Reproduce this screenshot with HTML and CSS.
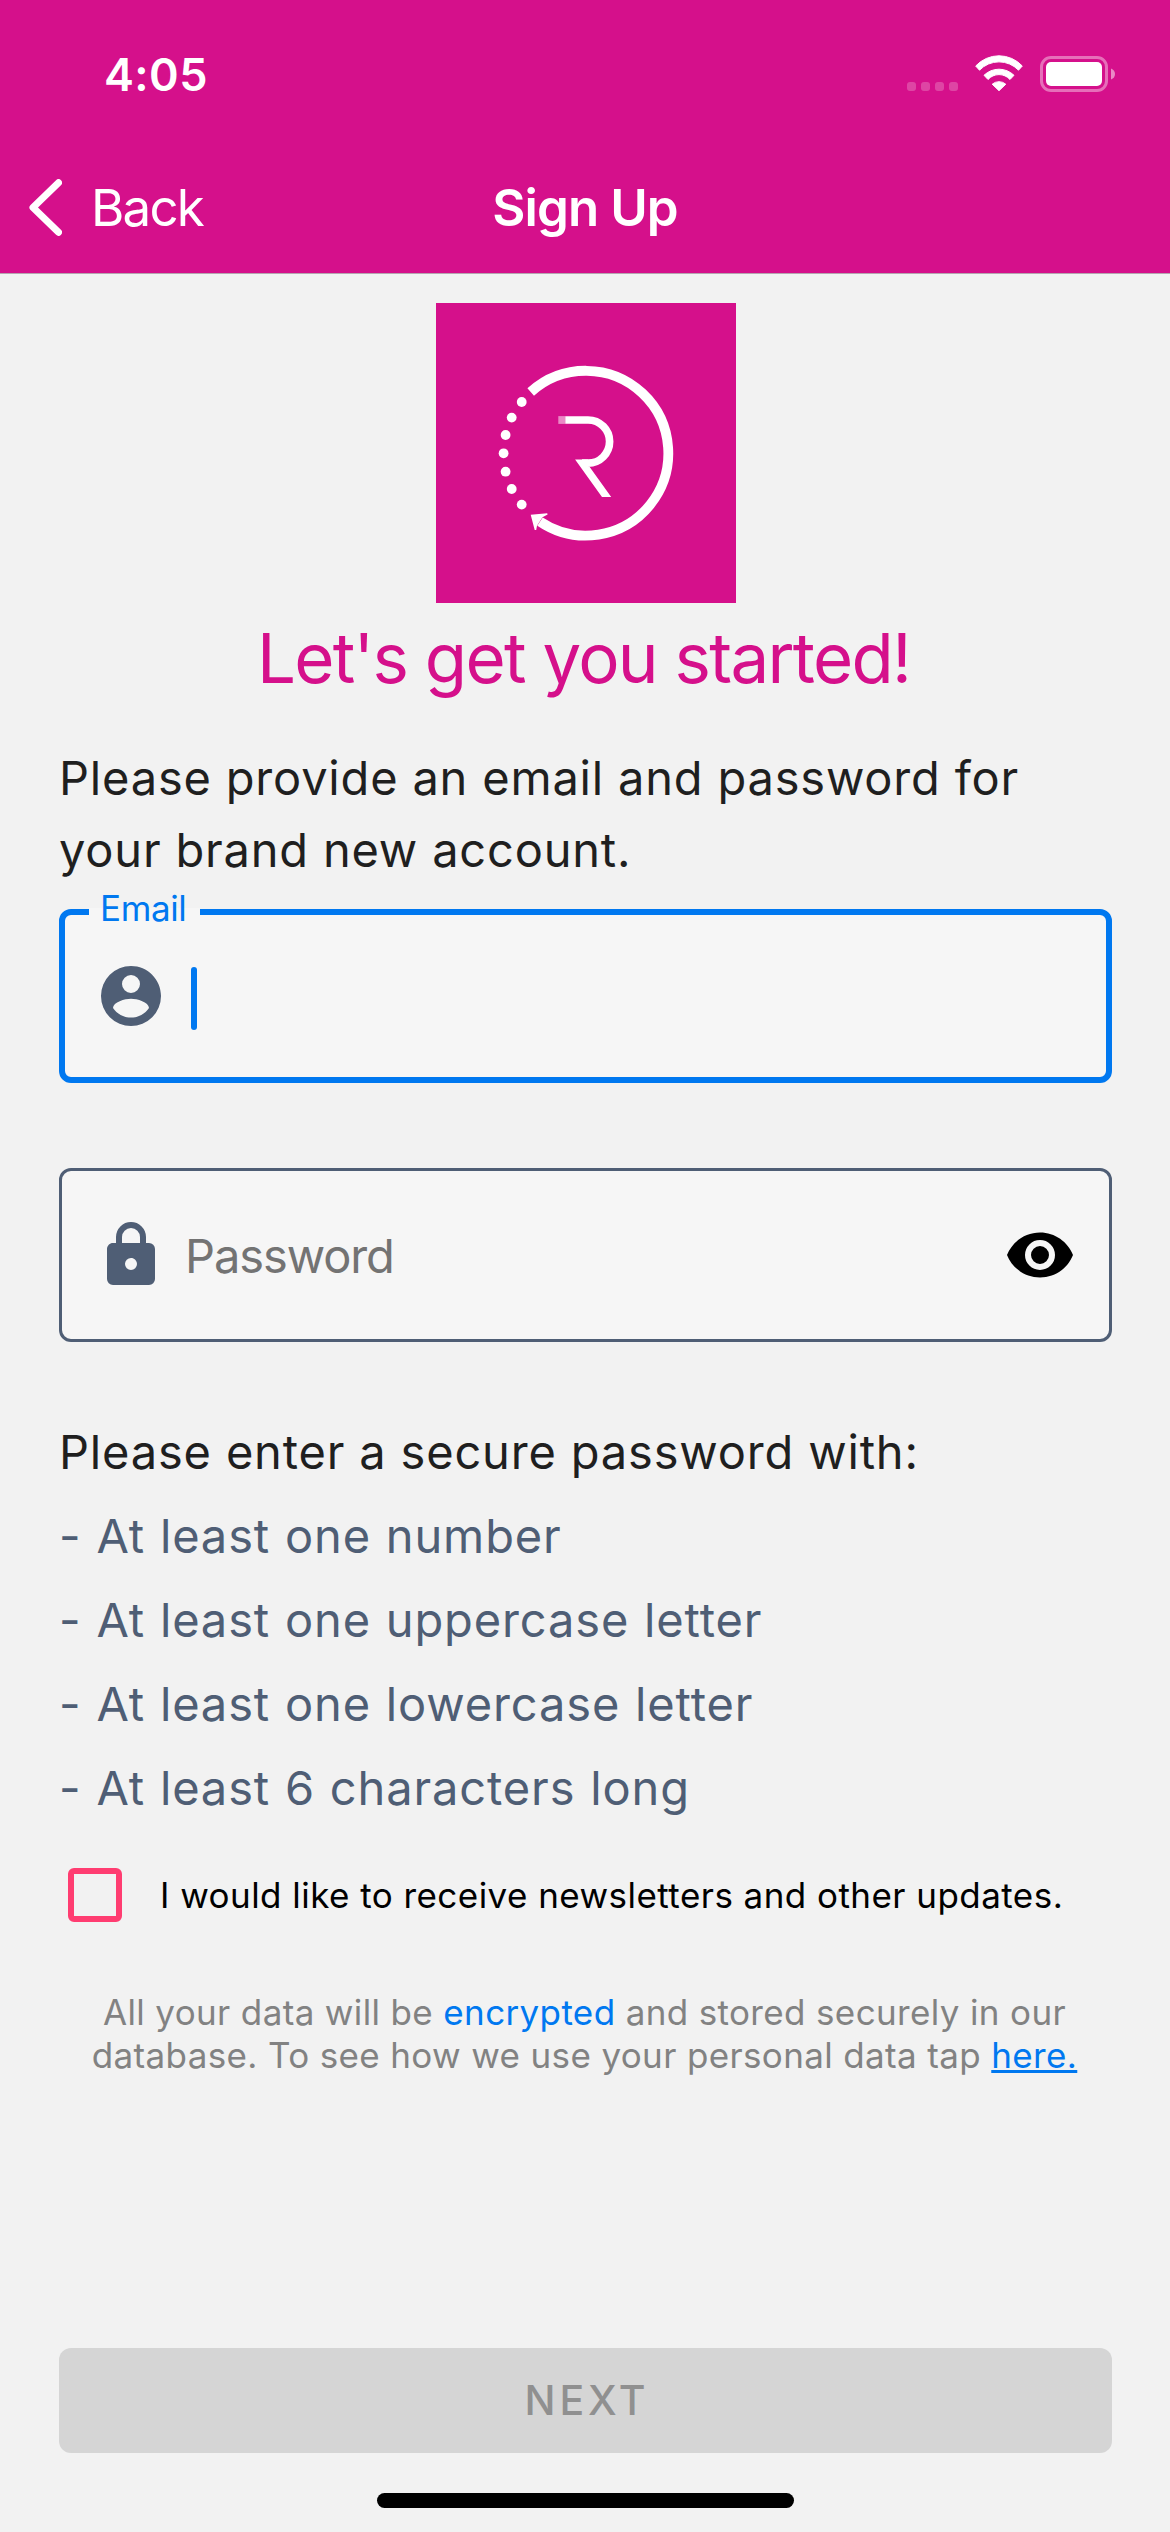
FILE: index.html
```html
<!DOCTYPE html>
<html lang="en">
<head>
<meta charset="utf-8">
<title>Sign Up</title>
<link rel="stylesheet" href="styles.css">
</head>
<body>
<div class="screen">
  <header class="header">
    <div class="status">
      <span class="time">4:05</span>
      <div class="indicators">
        <svg class="signal" width="51" height="38" viewBox="0 0 51 38"><g fill="#fff" opacity=".22"><rect x="0" y="27" width="9" height="9" rx="3"/><rect x="14" y="27" width="9" height="9" rx="3"/><rect x="28" y="27" width="9" height="9" rx="3"/><rect x="42" y="27" width="9" height="9" rx="3"/></g></svg>
        <svg class="wifi" width="48" height="38" viewBox="0 0 48 38"><g fill="#fff" stroke="#fff" stroke-width="1" stroke-linejoin="round"><path d="M.7 11A31.7 31.7 0 0 1 47.3 11L43.5 15.2A27 27 0 0 0 4.5 15.2Z"/><path d="M9 20.3A21.5 21.5 0 0 1 39 20.3L35 24.5A14.8 14.8 0 0 0 13 24.5Z"/><path d="M17.2 29.2A10.5 10.5 0 0 1 30.8 29.2L24 35.7Z"/></g></svg>
        <svg class="battery" width="75" height="38" viewBox="0 0 75 38"><rect x="1.5" y="2.5" width="65" height="33" rx="9.5" fill="none" stroke="#fff" stroke-width="3" opacity=".4"/><rect x="6" y="7" width="56" height="24" rx="5" fill="#fff"/><path d="M71 13.5Q75 15 75 19T71 24.5Z" fill="#fff" opacity=".5"/></svg>
      </div>
    </div>
    <nav class="nav">
      <div class="back">
        <svg width="33" height="57" viewBox="0 0 33 57"><path d="M29.5 3.7L4 28.5L29.5 53.3" fill="none" stroke="#fff" stroke-width="7" stroke-linecap="round" stroke-linejoin="round"/></svg>
        <span>Back</span>
      </div>
      <h1 class="nav-title">Sign Up</h1>
    </nav>
  </header>
  <main class="content">
    <svg class="logo" width="300" height="300" viewBox="0 0 300 300">
      <g fill="none" stroke="#fff">
        <path d="M94.7 89A82.4 82.4 0 1 1 104 218.6" stroke-width="9.8"/>
        <path d="M129.3 117H152A21.6 21.6 0 0 1 152 160.2H146" stroke-width="7.7"/>
      </g>
      <g fill="#fff">
        <path d="M122.3 113.1H129.4V120.9H122.3Z" opacity=".5"/>
        <path d="M139.1 156.4H152V164H153.7L175.2 194H166Z"/>
        <path d="M94.7 211.7L111.2 210.3L111.6 211.5L106.5 214.3L101 222.7L100.2 227H98.7Z"/>
        <circle cx="85.7" cy="99" r="4.9"/><circle cx="75.7" cy="114.6" r="4.9"/><circle cx="69.6" cy="132" r="4.9"/><circle cx="67.6" cy="150.3" r="4.9"/><circle cx="69.6" cy="168.7" r="4.9"/><circle cx="75.7" cy="186" r="4.9"/><circle cx="85.7" cy="201.6" r="4.9"/>
      </g>
    </svg>
    <h2 class="title">Let's get you started!</h2>
    <p class="intro">Please provide an email and password for<br>your brand new account.</p>
    <div class="field field-active">
      <span class="label">Email</span>
      <svg width="72" height="72" viewBox="0 0 24 24" fill="#4f5e75"><path d="M12,19.2C9.5,19.2 7.29,17.92 6,16C6.03,14 10,12.9 12,12.9C14,12.9 17.97,14 18,16C16.71,17.92 14.5,19.2 12,19.2M12,5A3,3 0 0,1 15,8A3,3 0 0,1 12,11A3,3 0 0,1 9,8A3,3 0 0,1 12,5M12,2A10,10 0 0,0 2,12A10,10 0 0,0 12,22A10,10 0 0,0 22,12C22,6.47 17.5,2 12,2Z"/></svg>
      <span class="caret"></span>
    </div>
    <div class="field">
      <svg width="72" height="72" viewBox="0 0 24 24" fill="#4f5e75"><path d="M12,17A2,2 0 0,0 14,15C14,13.89 13.1,13 12,13A2,2 0 0,0 10,15A2,2 0 0,0 12,17M18,8A2,2 0 0,1 20,10V20A2,2 0 0,1 18,22H6A2,2 0 0,1 4,20V10C4,8.89 4.9,8 6,8H7V6A5,5 0 0,1 12,1A5,5 0 0,1 17,6V8H18M12,3A3,3 0 0,0 9,6V8H15V6A3,3 0 0,0 12,3Z"/></svg>
      <span class="placeholder">Password</span>
      <svg width="72" height="72" viewBox="0 0 24 24"><path d="M12,9A3,3 0 0,0 9,12A3,3 0 0,0 12,15A3,3 0 0,0 15,12A3,3 0 0,0 12,9M12,17A5,5 0 0,1 7,12A5,5 0 0,1 12,7A5,5 0 0,1 17,12A5,5 0 0,1 12,17M12,4.5C7,4.5 2.73,7.61 1,12C2.73,16.39 7,19.5 12,19.5C17,19.5 21.27,16.39 23,12C21.27,7.61 17,4.5 12,4.5Z"/></svg>
    </div>
    <p class="rules-title">Please enter a secure password with:</p>
    <ul class="rules">
      <li>- At least one number</li>
      <li>- At least one uppercase letter</li>
      <li>- At least one lowercase letter</li>
      <li>- At least 6 characters long</li>
    </ul>
    <div class="newsletter"><span class="checkbox"></span><span>I would like to receive newsletters and other updates.</span></div>
    <p class="privacy">All your data will be <span class="link">encrypted</span> and stored securely in our<br>database. To see how we use your personal data tap <a class="link here">here.</a></p>
    <div class="next">NEXT</div>
  </main>
  <div class="home"></div>
</div>
</body>
</html>
```
FILE: styles.css
```css
* { box-sizing: border-box; }
body {
  margin: 0;
  background: #f2f2f2;
  font-family: Inter, "Liberation Sans", sans-serif;
  color: #1f1f1f;
}
h1, h2, p, ul { margin: 0; padding: 0; font-weight: 400; }
svg { display: block; flex: none; }
.screen {
  width: 1170px;
  height: 2532px;
  display: flex;
  flex-direction: column;
  overflow: hidden;
  white-space: nowrap;
}
.header {
  height: 274px;
  background: #d5108b;
  border-bottom: 1px solid #b5a6b0;
  color: #fff;
}
.status {
  height: 141px;
  padding: 7px 55px 0 104px;
  display: flex;
  justify-content: space-between;
  align-items: center;
}
.time { font-size: 45px; font-weight: 600; letter-spacing: .4px; }
.indicators { display: flex; }
.wifi { margin: 0 17px; }
.nav {
  height: 132px;
  display: grid;
  grid-template-columns: 1fr auto 1fr;
  align-items: center;
}
.back {
  display: flex;
  align-items: center;
  gap: 29px;
  padding-left: 29px;
  font-size: 51px;
  letter-spacing: -1.8px;
}
.nav-title { font-size: 51px; font-weight: 600; letter-spacing: -.9px; }
.content {
  flex: 1;
  padding: 29px 58px 0 59px;
  display: flex;
  flex-direction: column;
}
.logo { background: #d5108b; margin-left: 377px; }
.title {
  margin-top: 13px;
  padding-right: 4px;
  font-size: 69px;
  line-height: 84px;
  letter-spacing: -1.73px;
  text-align: center;
  color: #d5108b;
}
.intro { margin-top: 42px; font-size: 47px; line-height: 72px; letter-spacing: .81px; }
.field {
  position: relative;
  height: 174px;
  margin-top: 85px;
  padding: 0 33px;
  display: flex;
  align-items: center;
  border: 3px solid #4f5e75;
  border-radius: 12px;
  background: #f6f6f6;
}
.field-active { margin-top: 23px; padding: 0 30px; border: 6px solid #0078f0; }
.label {
  position: absolute;
  left: 24px;
  top: -7px;
  width: 111px;
  height: 8px;
  padding-left: 11px;
  background: #f6f6f6;
  color: #0078f0;
  font-size: 35px;
  line-height: 1px;
  letter-spacing: -.4px;
}
.caret { width: 6px; height: 63px; margin: 4px 0 0 24px; border-radius: 3px; background: #0078f0; }
.placeholder { flex: 1; margin-left: 18px; font-size: 47px; letter-spacing: -1.1px; color: #737373; }
.rules-title { margin-top: 68px; font-size: 47px; line-height: 84px; letter-spacing: .83px; }
.rules {
  list-style: none;
  font-size: 47px;
  line-height: 84px;
  letter-spacing: .87px;
  word-spacing: .8px;
  color: #4f5e75;
}
.newsletter {
  margin-top: 38px;
  display: flex;
  align-items: center;
  gap: 38px;
  padding-left: 9px;
  height: 54px;
  font-size: 35px;
  letter-spacing: .45px;
  color: #000;
}
.checkbox { width: 54px; height: 54px; border: 6px solid #ff3d71; border-radius: 6px; }
.privacy {
  margin-top: 69px;
  padding-right: 2px;
  font-size: 35px;
  line-height: 43px;
  letter-spacing: .36px;
  text-align: center;
  color: #828282;
}
.link { color: #0078f0; }
.here {
  text-decoration: underline;
  text-decoration-thickness: 3px;
  text-underline-offset: 2px;
  text-decoration-skip-ink: none;
}
.next {
  margin-top: 271px;
  padding-left: 3px;
  height: 105px;
  border-radius: 12px;
  background: #d5d5d5;
  color: #909090;
  font-size: 41px;
  font-weight: 500;
  line-height: 105px;
  letter-spacing: 3.8px;
  text-align: center;
}
.home { width: 417px; height: 15px; margin: 0 0 24px 377px; border-radius: 8px; background: #000; }
```
